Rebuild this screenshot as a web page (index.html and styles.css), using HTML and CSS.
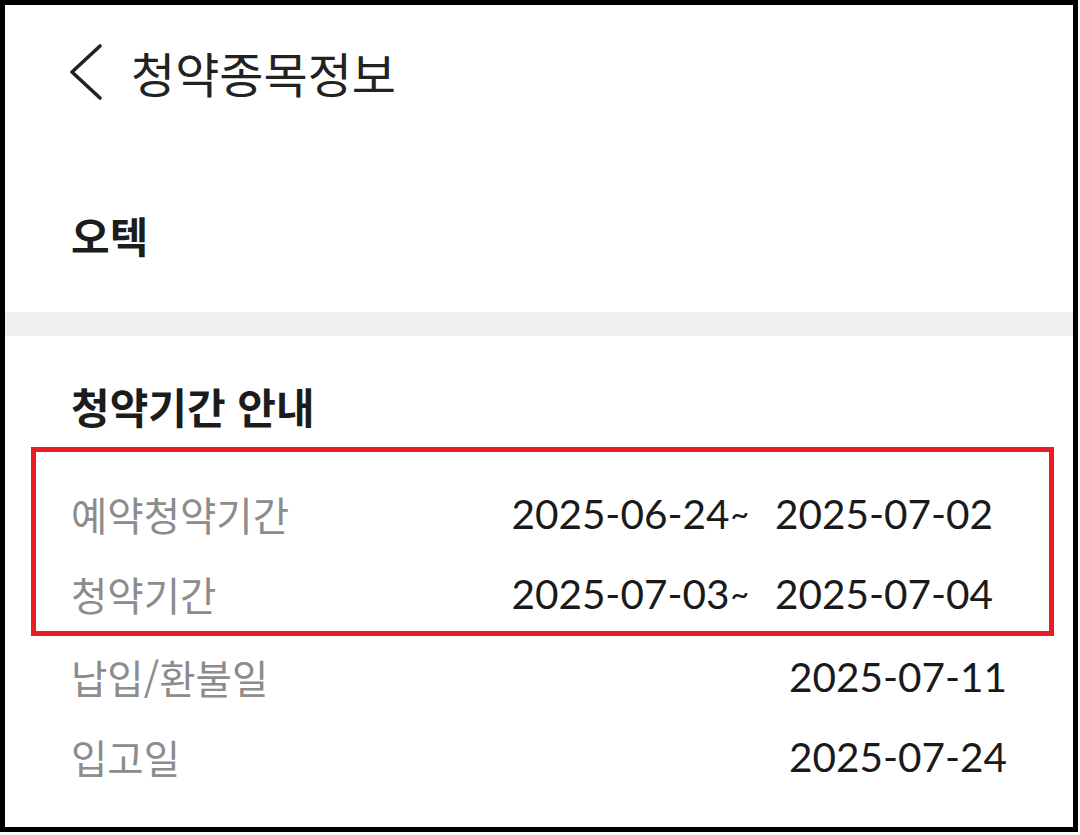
FILE: index.html
```html
<!DOCTYPE html>
<html lang="ko">
<head>
    <meta charset="UTF-8">
    <meta name="viewport" content="width=device-width, initial-scale=1.0">
    <title>청약종목정보</title>
    <link rel="stylesheet" href="styles.css">
</head>
<body>

    <div class="screen">
        <!-- Bovenbalk -->
        <header class="top-bar">
            <svg class="back" width="34" height="58" viewBox="0 0 34 58">
                <polyline points="31,3 3,29 31,55" fill="none" stroke="#222" stroke-width="3.6" stroke-linecap="round" stroke-linejoin="round"/>
            </svg>
            <h1>청약종목정보</h1>
        </header>

        <!-- Naam van het fonds -->
        <section class="stock">
            <h2>오텍</h2>
        </section>

        <div class="divider"></div>

        <!-- Periodes -->
        <section class="schedule">
            <h3>청약기간 안내</h3>
            <div class="row">
                <span class="label">예약청약기간</span>
                <span class="value range"><span>2025-06-24<span class="tilde">~</span></span><span>2025-07-02</span></span>
            </div>
            <div class="row">
                <span class="label">청약기간</span>
                <span class="value range"><span>2025-07-03<span class="tilde">~</span></span><span>2025-07-04</span></span>
            </div>
            <div class="row gap">
                <span class="label">납입/환불일</span>
                <span class="value">2025-07-11</span>
            </div>
            <div class="row">
                <span class="label">입고일</span>
                <span class="value">2025-07-24</span>
            </div>
        </section>

        <!-- Rode markering -->
        <div class="highlight"></div>
    </div>

</body>
</html>
```

FILE: styles.css
```css
body {
    margin: 0;
    padding: 0;
    background-color: #fff;
    font-family: "Noto Sans CJK KR", "Noto Sans", sans-serif;
    color: #1c1c1c;
}

.screen {
    position: relative;
    width: 1078px;
    height: 832px;
    border: 5px solid #000;
    box-sizing: border-box;
    background-color: #fff;
    overflow: hidden;
}

/* Bovenbalk */
.top-bar {
    height: 134px;
    display: flex;
    align-items: center;
    padding-left: 64px;
}

.top-bar .back {
    display: block;
}

.top-bar h1 {
    margin: 0 0 0 28px;
    font-size: 48px;
    font-weight: 400;
    line-height: 60px;
    color: #222;
}

/* Fondsnaam */
.stock {
    height: 173px;
    box-sizing: border-box;
    padding: 71px 0 0 66px;
}

.stock h2 {
    margin: 0;
    font-size: 42px;
    font-weight: 700;
    line-height: 50px;
}

.divider {
    height: 24px;
    background-color: #efefef;
}

/* Periodes */
.schedule {
    padding: 45px 66px 0 66px;
}

.schedule h3 {
    margin: 0 0 42px 0;
    font-size: 42px;
    font-weight: 700;
    line-height: 50px;
}

.row {
    height: 80px;
    display: flex;
    align-items: center;
    justify-content: space-between;
}

.row.gap {
    margin-top: 3px;
}

.row .label {
    font-size: 39.5px;
    color: #8c8c8c;
}

.row .value {
    font-family: Lato, "Liberation Sans", sans-serif;
    font-size: 40.5px;
    color: #1a1a1a;
}

.row .value.range {
    display: flex;
    gap: 26px;
    padding-right: 14px;
}

.row .tilde {
    font-size: 32px;
    vertical-align: 3px;
    margin-left: 1px;
}

/* Rode markering (annotatie bovenop de lijst) */
.highlight {
    position: absolute;
    left: 26px;
    top: 442px;
    width: 1023px;
    height: 189px;
    border: 5px solid #ec1c24;
    box-sizing: border-box;
}
```
